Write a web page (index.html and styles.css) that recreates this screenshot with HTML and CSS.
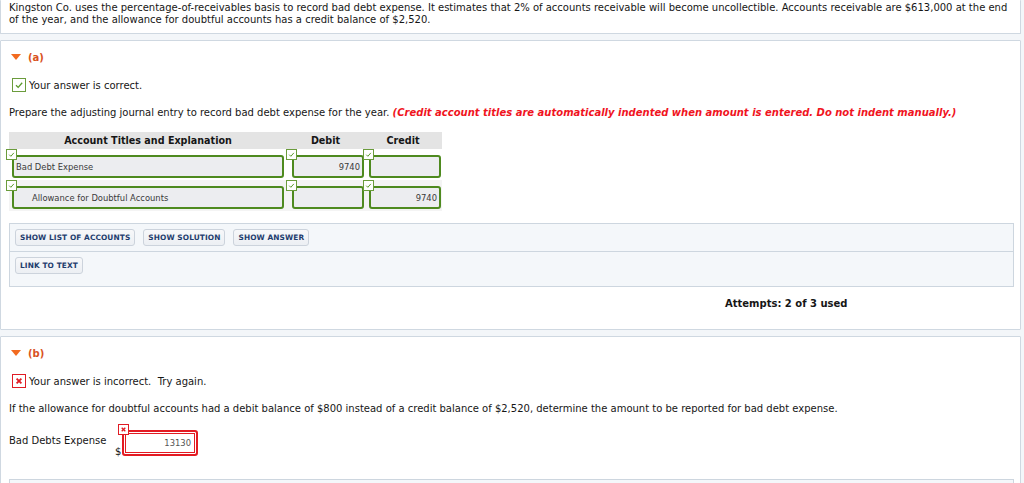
FILE: index.html
```html
<!DOCTYPE html>
<html>
<head>
<meta charset="utf-8">
<link rel="stylesheet" href="styles.css">
</head>
<body>
<div class="page">
  <div class="panel stem">
    <p>Kingston Co. uses the percentage-of-receivables basis to record bad debt expense. It estimates that 2% of accounts receivable will become uncollectible. Accounts receivable are $613,000 at the end of the year, and the allowance for doubtful accounts has a credit balance of $2,520.</p>
  </div>

  <div class="panel part part-a">
    <div class="part-head"><span class="tri"></span><span class="part-label">(a)</span></div>
    <div class="status"><span class="badge ok big"><svg viewBox="0 0 12 12"><path d="M3 6.2 L5.2 8.4 L9.2 3.8" fill="none" stroke="#5a9a2a" stroke-width="1.3"/></svg></span>Your answer is correct.</div>
    <p class="prompt">Prepare the adjusting journal entry to record bad debt expense for the year. <em class="warn">(Credit account titles are automatically indented when amount is entered. Do not indent manually.)</em></p>

    <div class="journal">
      <div class="jhead">
        <div>Account Titles and Explanation</div>
        <div>Debit</div>
        <div>Credit</div>
      </div>
      <div class="jrow">
        <div class="cell acct"><span class="badge ok"><svg viewBox="0 0 10 10"><path d="M2.5 5.2 L4.3 7 L7.6 3.2" fill="none" stroke="#5a9a2a" stroke-width="1.1"/></svg></span><div class="field">Bad Debt Expense</div></div>
        <div class="cell num"><span class="badge ok"><svg viewBox="0 0 10 10"><path d="M2.5 5.2 L4.3 7 L7.6 3.2" fill="none" stroke="#5a9a2a" stroke-width="1.1"/></svg></span><div class="field right">9740</div></div>
        <div class="cell num cr"><span class="badge ok"><svg viewBox="0 0 10 10"><path d="M2.5 5.2 L4.3 7 L7.6 3.2" fill="none" stroke="#5a9a2a" stroke-width="1.1"/></svg></span><div class="field right"></div></div>
      </div>
      <div class="jrow alt">
        <div class="cell acct"><span class="badge ok"><svg viewBox="0 0 10 10"><path d="M2.5 5.2 L4.3 7 L7.6 3.2" fill="none" stroke="#5a9a2a" stroke-width="1.1"/></svg></span><div class="field indent">Allowance for Doubtful Accounts</div></div>
        <div class="cell num"><span class="badge ok"><svg viewBox="0 0 10 10"><path d="M2.5 5.2 L4.3 7 L7.6 3.2" fill="none" stroke="#5a9a2a" stroke-width="1.1"/></svg></span><div class="field right"></div></div>
        <div class="cell num cr"><span class="badge ok"><svg viewBox="0 0 10 10"><path d="M2.5 5.2 L4.3 7 L7.6 3.2" fill="none" stroke="#5a9a2a" stroke-width="1.1"/></svg></span><div class="field right">9740</div></div>
      </div>
    </div>

    <div class="tools">
      <div class="tool-row">
        <span class="btn">Show List of Accounts</span>
        <span class="btn">Show Solution</span>
        <span class="btn">Show Answer</span>
      </div>
      <div class="tool-row">
        <span class="btn">Link to Text</span>
      </div>
    </div>

    <div class="attempts">Attempts: 2 of 3 used</div>
  </div>

  <div class="panel part part-b">
    <div class="part-head"><span class="tri"></span><span class="part-label">(b)</span></div>
    <div class="status"><span class="badge bad big"><svg viewBox="0 0 12 12"><path d="M3.6 3.6 L8.4 8.4 M8.4 3.6 L3.6 8.4" stroke="#e01c24" stroke-width="1.8"/></svg></span>Your answer is incorrect.&nbsp; Try again.</div>
    <p class="prompt">If the allowance for doubtful accounts had a debit balance of $800 instead of a credit balance of $2,520, determine the amount to be reported for bad debt expense.</p>
    <div class="answer-row">
      <span class="ans-label">Bad Debts Expense</span>
      <span class="dollar">$</span>
      <span class="ans-wrap"><span class="badge bad"><svg viewBox="0 0 10 10"><path d="M3 3 L7 7 M7 3 L3 7" stroke="#e01c24" stroke-width="1.5"/></svg></span><span class="ans-field">13130</span></span>
    </div>
    <div class="tools tail">
      <div class="tool-row"><span class="btn ghost"></span></div>
    </div>
  </div>
</div>
</body>
</html>
```
FILE: styles.css
```css
html, body {
  margin: 0;
  padding: 0;
}
body {
  background: #f3f6f9;
  font-family: "DejaVu Sans", Verdana, sans-serif;
  font-size: 10px;
  color: #161616;
  height: 483px;
  overflow: hidden;
}
.page {
  width: 1021px;
  display: flex;
  flex-direction: column;
  gap: 6px;
}
.panel {
  background: #fff;
  border: 1px solid #cfd8e1;
  border-radius: 1px;
}
.stem {
  border-top: none;
  padding: 2px 8px 7px 8px;
}
.stem p {
  margin: 0;
  line-height: 12px;
}
.part {
  padding: 0 8px;
}
.part-head {
  display: flex;
  align-items: center;
  height: 16px;
  margin-top: 8px;
  padding-left: 2px;
}
.tri {
  width: 0;
  height: 0;
  border-left: 5px solid transparent;
  border-right: 5px solid transparent;
  border-top: 6px solid #f26a1f;
  margin-right: 7px;
}
.part-label {
  color: #d9531e;
  font-weight: bold;
  font-size: 10px;
}
.status {
  display: flex;
  align-items: center;
  margin-top: 13px;
  height: 14px;
  padding-left: 3px;
}
.badge {
  display: inline-flex;
  box-sizing: border-box;
  width: 11px;
  height: 11px;
  background: #fff;
  border: 1px solid #6b9c3c;
}
.badge svg {
  width: 100%;
  height: 100%;
}
.badge.big {
  width: 14px;
  height: 14px;
  margin-right: 3px;
}
.badge.bad {
  border-color: #e01c24;
}
.prompt {
  margin: 14px 0 0 0;
  line-height: 14px;
}
.warn {
  color: #f0141e;
  font-weight: bold;
  font-style: italic;
}
.journal {
  margin-top: 12px;
  width: 433px;
}
.jhead {
  display: grid;
  grid-template-columns: 278px 77px 78px;
  background: #e4e4e4;
  height: 17px;
  align-items: center;
  font-weight: bold;
  font-size: 9.6px;
  text-align: center;
}
.jrow {
  display: grid;
  grid-template-columns: 278px 77px 78px;
  height: 31px;
}
.jrow.alt {
  background: #f4f4f4;
}
.cell {
  position: relative;
  padding: 6px 0 0 3px;
}
.cell.num {
  padding-left: 5px;
}
.cell .badge {
  position: absolute;
  left: -3px;
  top: 0;
}
.cell.num .badge {
  left: -1px;
}
.field {
  box-sizing: border-box;
  height: 23px;
  border: 2px solid #4e8a1f;
  border-radius: 3px;
  background: #ecedf0;
  font-size: 8.4px;
  color: #3a3a3a;
  padding: 0 2px;
  display: flex;
  align-items: center;
}
.cell.acct .field {
  width: 272px;
}
.cell.num .field {
  width: 72px;
}
.field.right {
  justify-content: flex-end;
}
.field.indent {
  padding-left: 18px;
}
.tools {
  margin-top: 12px;
  border: 1px solid #cdd6df;
  background: #f4f7fa;
  width: 1003px;
}
.tool-row {
  display: flex;
  gap: 8px;
  padding: 5px;
  height: 17px;
}
.tool-row + .tool-row {
  border-top: 1px solid #cdd6df;
  padding-bottom: 12px;
}
.btn {
  display: inline-flex;
  align-items: center;
  box-sizing: border-box;
  height: 17px;
  padding: 0 4px;
  border: 1px solid #ccd3dc;
  border-radius: 3px;
  background: linear-gradient(#f7f8fa, #eceff3);
  color: #1f3d6e;
  font-weight: bold;
  font-size: 7.4px;
  text-transform: uppercase;
  letter-spacing: 0.1px;
}
.attempts {
  font-weight: bold;
  font-size: 10px;
  margin: 11px 0 0 716px;
  height: 14px;
  padding-bottom: 17px;
}
.answer-row {
  display: flex;
  align-items: flex-start;
  margin-top: 9px;
  height: 31px;
}
.ans-label {
  margin-top: 10px;
  width: 106px;
}
.dollar {
  margin-top: 21px;
  width: 7px;
}
.ans-wrap {
  position: relative;
  padding-top: 5px;
}
.ans-wrap .badge {
  position: absolute;
  left: -4px;
  top: -1px;
}
.ans-field {
  box-sizing: border-box;
  display: flex;
  align-items: center;
  justify-content: flex-end;
  width: 76px;
  height: 26px;
  border: 2px solid #e31b23;
  border-radius: 3px;
  box-shadow: inset 0 0 0 1px #fff, inset 0 0 0 2px #e31b23;
  background: #fff;
  color: #555;
  font-size: 8.4px;
  padding-right: 5px;
}
.tools.tail {
  margin-top: 23px;
  height: 20px;
}
.btn.ghost {
  width: 119px;
  background: #fff;
}
```
